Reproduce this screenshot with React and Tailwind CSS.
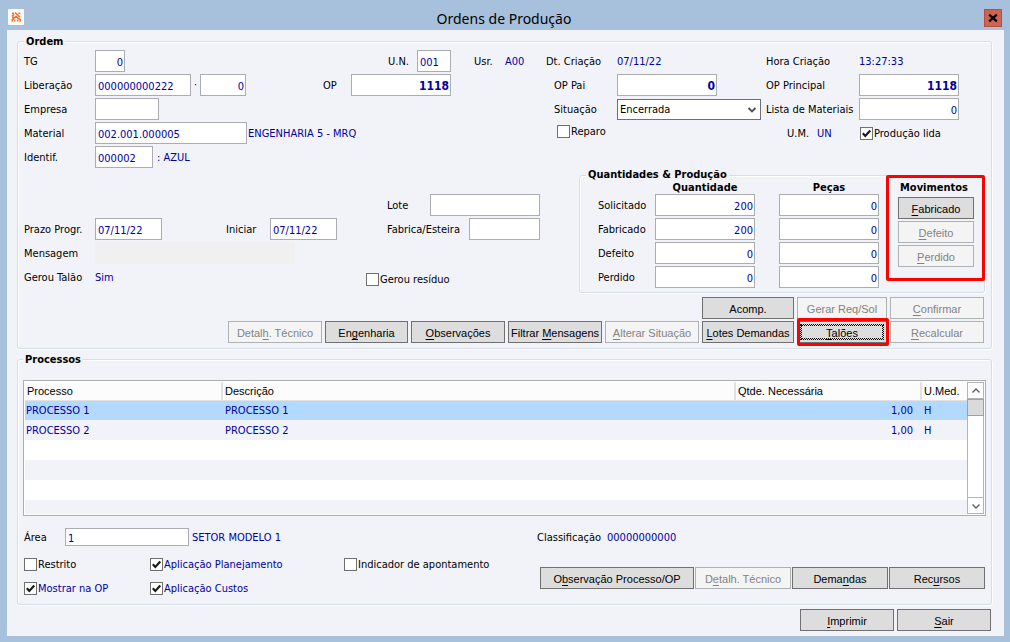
import { useState } from "react";
import clsx from "clsx";

const PROCESSES = [
  { id: 1, process: "PROCESSO 1", description: "PROCESSO 1", quantity: "1,00", unit: "H" },
  { id: 2, process: "PROCESSO 2", description: "PROCESSO 2", quantity: "1,00", unit: "H" },
];

const EMPTY_ROWS = 4;

const QUANTITIES = [
  { id: "solicitado", label: "Solicitado", quantity: "200", pieces: "0" },
  { id: "fabricado", label: "Fabricado", quantity: "200", pieces: "0" },
  { id: "defeito", label: "Defeito", quantity: "0", pieces: "0" },
  { id: "perdido", label: "Perdido", quantity: "0", pieces: "0" },
];

// "&" marks the access key, e.g. "&Sair"
function AccessText({ text }) {
  const at = text.indexOf("&");
  if (at < 0) return text;
  return (
    <>
      {text.slice(0, at)}
      <span className="underline underline-offset-2">{text[at + 1]}</span>
      {text.slice(at + 2)}
    </>
  );
}

function Button({ text, disabled, className }) {
  return (
    <button
      type="button"
      disabled={disabled}
      className={clsx(
        "h-[22px] border pt-0.5 whitespace-nowrap font-['Liberation_Sans',Arial,sans-serif] text-[11px] leading-4",
        disabled ? "border-[#adb2b5] bg-[#f4f4f4] text-[#838383]" : "border-[#707070] bg-[#dddddd] text-black",
        className
      )}
    >
      <AccessText text={text} />
    </button>
  );
}

function Label({ className, ...rest }) {
  return <label className={clsx("shrink-0 pt-0.5 whitespace-nowrap", className)} {...rest} />;
}

function Caption({ className, children }) {
  return <span className={clsx("shrink-0 pt-0.5 whitespace-nowrap", className)}>{children}</span>;
}

function Value({ className, children }) {
  return <span className={clsx("shrink-0 pt-0.5 whitespace-nowrap text-[#0000a0]", className)}>{children}</span>;
}

function Field({ id, value = "", className, ...rest }) {
  const [text, setText] = useState(value);
  return (
    <input
      id={id}
      type="text"
      value={text}
      onChange={(e) => setText(e.target.value)}
      className={clsx("h-[22px] shrink-0 border border-[#abadb3] bg-white pt-0.5 pr-px pl-0.5 text-[#0000a0] outline-none", className)}
      {...rest}
    />
  );
}

function Check({ id, label, checked = false, className }) {
  const [on, setOn] = useState(checked);
  return (
    <label htmlFor={id} className={clsx("flex items-center gap-px whitespace-nowrap", className)}>
      <span className="relative flex size-[13px] shrink-0">
        <input
          id={id}
          type="checkbox"
          checked={on}
          onChange={() => setOn(!on)}
          className="size-[13px] appearance-none border border-[#707070] bg-white"
        />
        {on && (
          <svg viewBox="0 0 13 13" className="pointer-events-none absolute inset-0 size-[13px]" fill="none" stroke="#1a1a1a" strokeWidth="2.2">
            <path d="M2.8 6.3 5.3 9 10.3 3.6" />
          </svg>
        )}
      </span>
      <span className="pt-0.5">{label}</span>
    </label>
  );
}

function Group({ title, className, legendClassName = "pt-0.5 leading-[14px]", children }) {
  return (
    <fieldset
      className={clsx(
        "min-w-0 rounded-[3px] border border-[#d5dfe5] shadow-[inset_1px_1px_0_#fff,1px_1px_0_#fff]",
        className
      )}
    >
      <legend className={clsx("bg-[#f2f3f9] px-0.5 font-bold", legendClassName)}>{title}</legend>
      {children}
    </fieldset>
  );
}

// Red frame that calls attention to a control
function Highlight({ className }) {
  return <span className={clsx("pointer-events-none absolute rounded-[2px] border-3 border-[#ff0000]", className)} />;
}

function TitleBar() {
  return (
    <header className="relative flex h-[30px] items-center justify-between px-2">
      <svg viewBox="0 0 16 16" className="mt-1 size-4 rounded-[1px] bg-white" fill="none" stroke="#f3702a" strokeWidth="1.6">
        <path d="M4 4.2h2M4 7l2.2-1.6M7 3.6l5 4.6M10.4 4.2h2M4 8.6l2-.6" />
        <path d="M4.2 12.6v-2L8 7.6l4.2 3v2M6.6 12.6v-2M9.6 12.6v-2" />
      </svg>
      <h1 className="pt-2 font-['Noto_Sans','Open_Sans',sans-serif] text-[14px] leading-5">Ordens de Produção</h1>
      <button
        type="button"
        aria-label="Fechar"
        className="mt-1.5 flex size-[18px] items-center justify-center border border-[#b5503f] bg-[#cd6452]"
      >
        <svg viewBox="0 0 10 10" className="size-[10px]" stroke="#000" strokeWidth="2.2">
          <path d="M1.2 1.6 8.8 8.4M8.8 1.6 1.2 8.4" />
        </svg>
      </button>
    </header>
  );
}

function OrderDetails() {
  return (
    <div className="flex flex-1 flex-col gap-0.5">
      <div className="flex h-[22px] items-center">
        <Label htmlFor="tg" className="w-[71px]">TG</Label>
        <Field id="tg" value="0" className="w-[30px] text-right" />
        <Label htmlFor="un" className="ml-auto w-[29px]">U.N.</Label>
        <Field id="un" value="001" className="w-[34px]" />
        <Caption className="ml-[23px] w-[31px]">Usr.</Caption>
        <Value className="w-[35px]">A00</Value>
      </div>
      <div className="flex h-[22px] items-center">
        <Label htmlFor="liberacao" className="w-[71px]">Liberação</Label>
        <Field id="liberacao" value="000000000222" className="w-24" />
        <span className="w-[9px] text-center">·</span>
        <Field id="liberacao-seq" value="0" aria-label="Sequência da liberação" className="w-[46px] text-right" />
        <Label htmlFor="op" className="ml-auto w-7">OP</Label>
        <Field id="op" value="1118" className="mr-[89px] w-[100px] text-right text-[12px] font-bold" />
      </div>
      <div className="flex h-[22px] items-center">
        <Label htmlFor="empresa" className="w-[71px]">Empresa</Label>
        <Field id="empresa" className="w-16" />
      </div>
      <div className="flex h-[22px] items-center">
        <Label htmlFor="material" className="w-[71px]">Material</Label>
        <Field id="material" value="002.001.000005" className="w-[152px]" />
        <Value className="pl-px">ENGENHARIA 5 - MRQ</Value>
      </div>
      <div className="flex h-[22px] items-center">
        <Label htmlFor="identif" className="w-[71px]">Identif.</Label>
        <Field id="identif" value="000002" className="w-[58px]" />
        <Value className="pl-1">: AZUL</Value>
      </div>
      <div className="mt-6 flex h-[22px] items-center justify-end">
        <Label htmlFor="lote" className="w-[43px]">Lote</Label>
        <Field id="lote" className="w-[110px]" />
      </div>
      <div className="flex h-[22px] items-center">
        <Label htmlFor="prazo" className="w-[71px]">Prazo Progr.</Label>
        <Field id="prazo" value="07/11/22" className="w-[67px]" />
        <Label htmlFor="iniciar" className="ml-16 w-11">Iniciar</Label>
        <Field id="iniciar" value="07/11/22" className="w-[67px]" />
        <Label htmlFor="fabrica" className="ml-auto w-[82px]">Fabrica/Esteira</Label>
        <Field id="fabrica" className="w-[71px]" />
      </div>
      <div className="flex h-[22px] items-center">
        <Caption className="w-[71px]">Mensagem</Caption>
        <output className="h-[22px] w-[200px] bg-[#f0f0f0]" />
      </div>
      <div className="flex h-[22px] items-center">
        <Caption className="w-[71px]">Gerou Talão</Caption>
        <Value>Sim</Value>
        <Check id="residuo" label="Gerou resíduo" className="mt-1 ml-auto w-[174px]" />
      </div>
    </div>
  );
}

function OrderStatus() {
  return (
    <div className="grid auto-rows-[22px] grid-cols-[71px_149px_93px_1fr] items-center gap-y-0.5">
      <Caption>Dt. Criação</Caption>
      <Value>07/11/22</Value>
      <Caption>Hora Criação</Caption>
      <Value>13:27:33</Value>

      <Label htmlFor="op-pai" className="pl-2">OP Pai</Label>
      <Field id="op-pai" value="0" className="w-[100px] text-right text-[12px] font-bold" />
      <Label htmlFor="op-principal">OP Principal</Label>
      <Field id="op-principal" value="1118" className="w-[100px] text-right text-[12px] font-bold" />

      <Label htmlFor="situacao" className="pl-2">Situação</Label>
      <span className="relative flex w-36">
        <select id="situacao" className="h-[21px] w-full appearance-none border border-[#707070] bg-white pt-px pl-0.5">
          <option>Encerrada</option>
        </select>
        <svg viewBox="0 0 10 10" className="pointer-events-none absolute top-1.5 right-1 size-[10px]" fill="none" stroke="#505050" strokeWidth="1.8">
          <path d="M1.5 3 5 6.5 8.5 3" />
        </svg>
      </span>
      <Label htmlFor="lista">Lista de Materiais</Label>
      <Field id="lista" value="0" className="w-[100px] text-right" />

      <Check id="reparo" label="Reparo" className="mb-1 pl-[11px]" />
      <span />
      <Caption className="flex gap-2 pl-[21px]">
        U.M. <span className="text-[#0000a0]">UN</span>
      </Caption>
      <Check id="producao-lida" label="Produção lida" checked className="pl-px" />
    </div>
  );
}

function Quantities() {
  return (
    <Group title="Quantidades & Produção" className="mt-[25px] ml-[33px] flex pr-2.5 pb-1 pl-[18px]" legendClassName="-ml-3 leading-3">
      <div className="flex flex-col gap-0.5">
        <div className="-mb-0.5 flex h-[13px] pl-[57px] text-center leading-[13px] font-bold">
          <span className="w-[100px]">Quantidade</span>
          <span className="ml-6 w-[100px]">Peças</span>
        </div>
        {QUANTITIES.map((row) => (
          <div key={row.id} className="flex h-[22px] items-center">
            <Label htmlFor={row.id} className="w-[57px]">{row.label}</Label>
            <Field id={row.id} value={row.quantity} className="w-[100px] text-right" />
            <Field
              id={`${row.id}-pecas`}
              value={row.pieces}
              aria-label={`${row.label}, peças`}
              className="ml-6 w-[100px] text-right"
            />
          </div>
        ))}
      </div>
      <div className="relative ml-auto flex w-[76px] flex-col gap-0.5">
        <span className="h-3.5 pr-1 text-center leading-[13px] font-bold">Movimentos</span>
        <Button text="&Fabricado" />
        <Button text="&Defeito" disabled />
        <Button text="&Perdido" disabled />
        <Highlight className="-top-1.5 -right-[11px] -left-3 h-[106px]" />
      </div>
    </Group>
  );
}

function OrderActions() {
  return (
    <div className="mt-1 grid grid-cols-[94px_83px_94px_94px_94px_92px_90px_94px] justify-end gap-x-[3px] gap-y-0.5 pr-px">
      <Button text="Acomp." className="col-start-6" />
      <Button text="Gerar Req/Sol" disabled />
      <Button text="&Confirmar" disabled />
      <Button text="Detal&h. Técnico" disabled />
      <Button text="En&genharia" />
      <Button text="&Observações" />
      <Button text="Filtrar &Mensagens" />
      <Button text="&Alterar Situação" disabled />
      <Button text="&Lotes Demandas" />
      <div className="relative flex">
        <Button text="&Talões" className="flex-1 outline-1 -outline-offset-4 outline-dotted outline-black" />
        <span className="pointer-events-none absolute inset-[4px] border border-dotted border-black" />
        <Highlight className="-top-[3px] -right-0.5 -bottom-[3px] left-0" />
      </div>
      <Button text="&Recalcular" disabled />
    </div>
  );
}

function ScrollBar() {
  return (
    <div className="flex w-[17px] flex-col border border-[#b4b4b4] bg-white">
      <button type="button" aria-label="Rolar para cima" className="flex h-4 items-center justify-center border-b border-[#b4b4b4]">
        <svg viewBox="0 0 10 10" className="size-[10px]" fill="none" stroke="#606060" strokeWidth="1.4">
          <path d="M1.5 6.5 5 3l3.5 3.5" />
        </svg>
      </button>
      <div className="-mx-px h-[17px] border border-[#a0a0a0] bg-[#dadada]" />
      <button type="button" aria-label="Rolar para baixo" className="mt-auto flex h-4 items-center justify-center border-t border-[#b4b4b4]">
        <svg viewBox="0 0 10 10" className="size-[10px]" fill="none" stroke="#606060" strokeWidth="1.4">
          <path d="M1.5 3.5 5 7l3.5-3.5" />
        </svg>
      </button>
    </div>
  );
}

function ProcessTable() {
  const [selected, setSelected] = useState(1);
  return (
    <div className="flex h-[136px] border border-[#abadb3] bg-white p-px">
      <div className="flex-1 overflow-hidden">
        <table className="w-full table-fixed border-collapse">
          <colgroup>
            <col className="w-[197px]" />
            <col />
            <col className="w-[186px]" />
            <col className="w-[46px]" />
          </colgroup>
          <thead>
            <tr className="h-[18px] bg-[#fcfcfc] text-left font-['Liberation_Sans',Arial,sans-serif] text-[11px] leading-4 *:border-r-2 *:border-b *:border-[#e2e2e2] *:px-0.5 *:py-0 *:font-normal *:last:border-r-0">
              <th>Processo</th>
              <th>Descrição</th>
              <th>Qtde. Necessária</th>
              <th>U.Med.</th>
            </tr>
          </thead>
          <tbody className="text-[#0000a0]">
            {PROCESSES.map((row) => (
              <tr
                key={row.id}
                onClick={() => setSelected(row.id)}
                className={clsx("h-5 *:p-0 *:pt-0.5", selected === row.id ? "bg-[#b3d9ff]" : "bg-[#f2f3f9]")}
              >
                <td><span className="pl-px">{row.process}</span></td>
                <td><span className="pl-[3px]">{row.description}</span></td>
                <td className="text-right"><span className="pr-2">{row.quantity}</span></td>
                <td><span className="pl-[3px]">{row.unit}</span></td>
              </tr>
            ))}
            {Array.from({ length: EMPTY_ROWS }, (_, i) => (
              <tr key={i} className={clsx("h-5", i % 2 === 0 ? "bg-white" : "bg-[#f2f3f9]")}>
                <td colSpan={4} />
              </tr>
            ))}
          </tbody>
        </table>
      </div>
      <ScrollBar />
    </div>
  );
}

function App() {
  return (
    <div className="flex min-h-screen flex-col bg-[#a7c0dc] font-['DejaVu_Sans_Condensed','DejaVu_Sans',sans-serif] text-[11px] leading-4 text-black">
      <TitleBar />
      <main className="mr-1.5 mb-1.5 ml-[7px] flex-1 bg-[#f2f3f9] pt-[3px] pr-3 pb-[5px] pl-2.5">
        <Group title="Ordem" className="pt-px pr-1.5 pb-[5px] pl-1.5">
          <div className="flex gap-1.5">
            <OrderDetails />
            <div className="w-[439px]">
              <OrderStatus />
              <Quantities />
            </div>
          </div>
          <OrderActions />
        </Group>

        <Group title="Processos" className="mt-0.5 px-[5px] pt-[13px] pb-1">
          <ProcessTable />
          <div className="mt-2.5 flex h-[22px] items-center pl-px">
            <Label htmlFor="area" className="w-[41px]">Área</Label>
            <Field id="area" value="1" className="h-[18px]! w-[124px]" />
            <Value className="pl-[3px]">SETOR MODELO 1</Value>
            <Caption className="ml-auto w-[70px]">Classificação</Caption>
            <Value className="w-[379px]">00000000000</Value>
          </div>
          <div className="mt-1 flex justify-between px-px">
            <div className="grid auto-rows-[24px] grid-cols-[126px_194px_auto] text-[#0000a0]">
              <Check id="restrito" label="Restrito" className="text-black" />
              <Check id="planejamento" label="Aplicação Planejamento" checked />
              <Check id="indicador" label="Indicador de apontamento" className="text-black" />
              <Check id="mostrar" label="Mostrar na OP" checked />
              <Check id="custos" label="Aplicação Custos" checked />
            </div>
            <div className="mb-[11px] flex gap-px self-end">
              <Button text="O&bservação Processo/OP" className="w-[154px]" />
              <Button text="D&etalh. Técnico" disabled className="w-24" />
              <Button text="Dema&ndas" className="w-24" />
              <Button text="Rec&ursos" className="w-24" />
            </div>
          </div>
        </Group>

        <footer className="mt-1 flex justify-end gap-[3px] pr-px">
          <Button text="&Imprimir" className="w-[94px]" />
          <Button text="&Sair" className="w-[94px]" />
        </footer>
      </main>
    </div>
  );
}

export default App;
